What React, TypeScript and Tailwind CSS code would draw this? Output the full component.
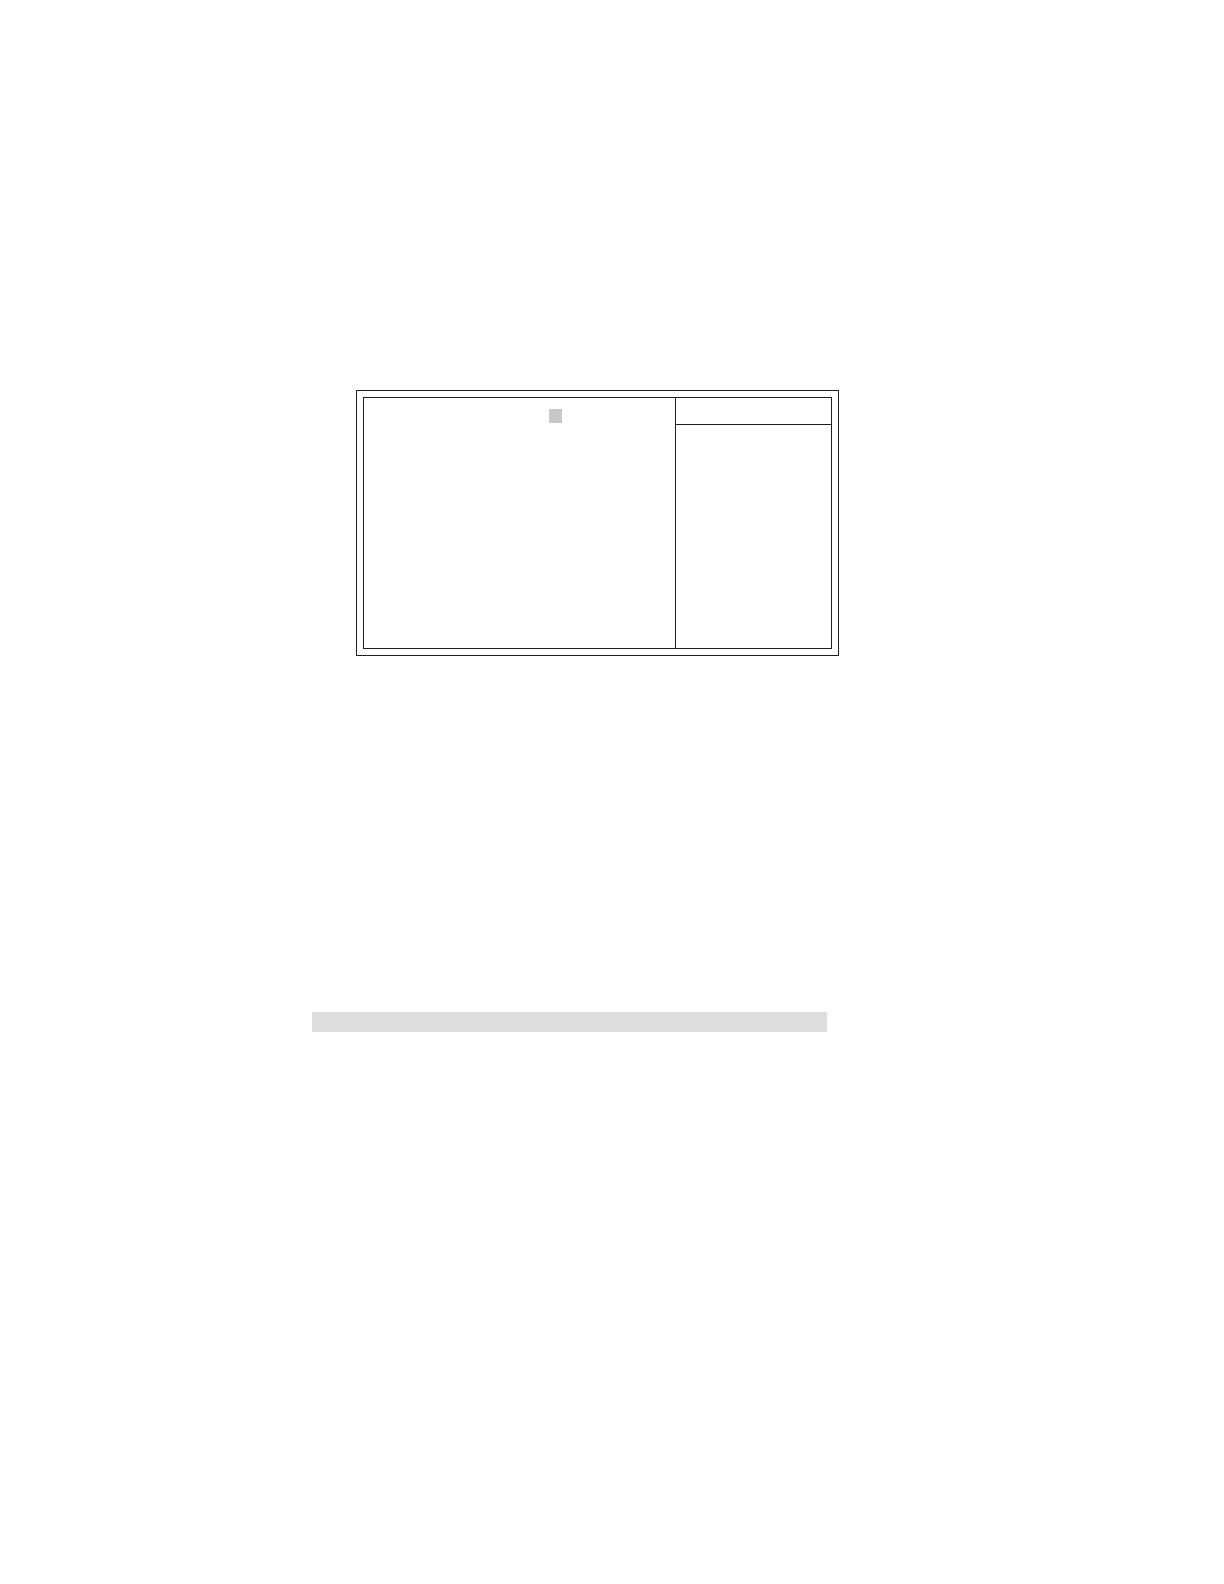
export default function App() {
  return (
    <main className="min-h-screen bg-white pt-[390px] pr-[385px] pb-16 pl-[312px]">
      {/* Double-framed setup screen: options on the left, help on the right */}
      <section aria-label="Setup screen" className="ml-[44px] border border-[#231f20] p-[6px]">
        <div className="flex min-h-[252px] border border-[#231f20]">
          <div className="flex-1 pt-[11px] pl-[185px]">
            <div className="h-[14px] w-[13px] bg-[#c7c8ca]" />
          </div>
          <aside aria-label="Help" className="w-[156px] border-l border-[#231f20]">
            <div className="h-[27px] border-b border-[#231f20]" />
          </aside>
        </div>
      </section>
      {/* Shaded section band */}
      <div className="mt-[356px] mr-[12px] h-5 bg-[#dcddde]" />
    </main>
  );
}
